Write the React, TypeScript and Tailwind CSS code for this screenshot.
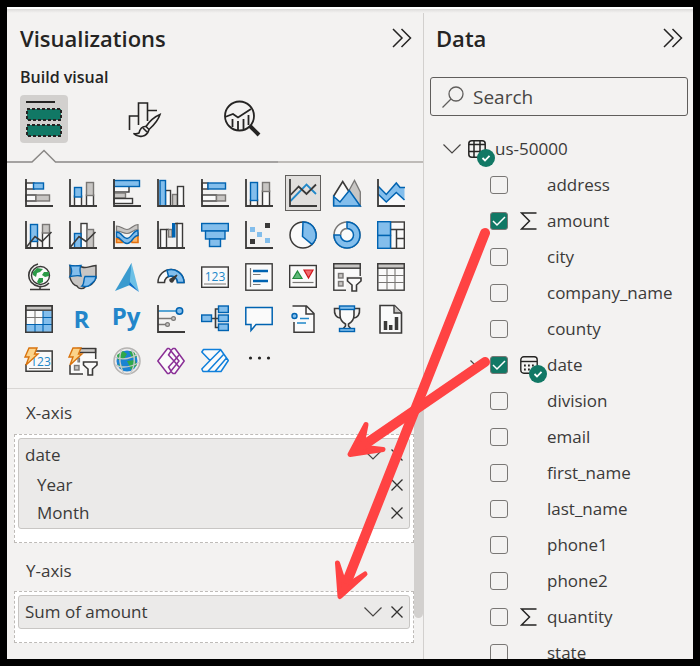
import { useState, type ReactNode } from 'react'

const INK = '#3b3a39'
const BLUE = '#0063b1'
const SKY = '#83beec'
const GRAY = '#797775'
const SILVER = '#c8c6c4'
const PAPER = '#fafafa'

type BoxTone = 'blue' | 'gray' | 'white' | 'silver'

const tones: Record<BoxTone, { fill: string; stroke: string }> = {
  blue: { fill: SKY, stroke: BLUE },
  gray: { fill: SILVER, stroke: GRAY },
  silver: { fill: SILVER, stroke: INK },
  white: { fill: PAPER, stroke: INK }
}

// Rectangle given by its two corners, in one of the shared chart tones
function Box({ p, tone }: { p: [number, number, number, number]; tone: BoxTone }) {
  const [x1, y1, x2, y2] = p
  return <rect x={x1} y={y1} width={x2 - x1} height={y2 - y1} strokeWidth={1.4} {...tones[tone]} />
}

function Axis() {
  return <path d="M1 0V27H28" fill="none" stroke={INK} strokeWidth={1.8} />
}

function Bolt() {
  return (
    <path
      d="M4 1H12L9.500 7H13L1 18L4 10H0Z"
      fill="#fbd38a"
      stroke="#d9730d"
      strokeWidth={1.4}
    />
  )
}

function Funnel() {
  return (
    <path d="M14.500 15H28V18L23.500 22V28H19V22L14.500 18Z" fill={PAPER} stroke={INK} strokeWidth={1.6} />
  )
}

const visuals: { name: string; icon: ReactNode }[] = [
  {
    name: 'Stacked bar chart',
    icon: (
      <>
        <Box p={[1, 4, 9, 10]} tone="white" />
        <Box p={[8.5, 4, 18.5, 10]} tone="blue" />
        <Box p={[1, 16, 11, 22]} tone="white" />
        <Box p={[11, 16, 24.5, 22]} tone="gray" />
        <Axis />
      </>
    )
  },
  {
    name: 'Stacked column chart',
    icon: (
      <>
        <Box p={[5.5, 17, 12.5, 27]} tone="white" />
        <Box p={[5.5, 8.5, 12.5, 18]} tone="blue" />
        <Box p={[17.5, 16, 24.5, 27]} tone="white" />
        <Box p={[17.5, 3.5, 24.5, 16.5]} tone="gray" />
        <Axis />
      </>
    )
  },
  {
    name: 'Clustered bar chart',
    icon: (
      <>
        <Box p={[1, 7, 16, 13]} tone="white" />
        <Box p={[1, 14, 12.5, 19]} tone="gray" />
        <Box p={[1, 19.5, 19.5, 24.5]} tone="white" />
        <Box p={[1, 1.5, 26.5, 7.5]} tone="blue" />
        <Axis />
      </>
    )
  },
  {
    name: 'Clustered column chart',
    icon: (
      <>
        <Box p={[8.5, 11.5, 13.5, 27]} tone="white" />
        <Box p={[3, 1.5, 8.5, 27]} tone="blue" />
        <Box p={[15.5, 15.5, 20.5, 27]} tone="gray" />
        <Box p={[20.5, 7.5, 26.5, 27]} tone="white" />
        <Axis />
      </>
    )
  },
  {
    name: '100% stacked bar chart',
    icon: (
      <>
        <Box p={[1, 4, 7, 10]} tone="white" />
        <Box p={[7, 4, 24.5, 10]} tone="blue" />
        <Box p={[1, 16, 15.5, 22]} tone="white" />
        <Box p={[15.5, 16, 24.5, 22]} tone="gray" />
        <Axis />
      </>
    )
  },
  {
    name: '100% stacked column chart',
    icon: (
      <>
        <Box p={[5.5, 21, 12.5, 27]} tone="white" />
        <Box p={[5.5, 3.5, 12.5, 21.5]} tone="blue" />
        <Box p={[17.5, 12, 24.5, 27]} tone="white" />
        <Box p={[17.5, 3.5, 24.5, 12.5]} tone="gray" />
        <Axis />
      </>
    )
  },
  {
    name: 'Line chart',
    icon: (
      <>
        <path d="M1.500 22L17.500 5.500L27 15" fill="none" stroke="#2188c9" strokeWidth={1.8} />
        <path d="M1.500 16L9.700 7.500L17.500 15L27 5.500" fill="none" stroke={INK} strokeWidth={1.8} />
        <Axis />
      </>
    )
  },
  {
    name: 'Area chart',
    icon: (
      <>
        <path d="M13 17L21.500 1.500L27.300 13V27Z" fill={SILVER} stroke={GRAY} strokeWidth={1.3} />
        <path d="M.700 17L9.700 2.500L20 19L14 26H.700Z" fill={PAPER} stroke={INK} strokeWidth={1.6} />
        <path d="M.700 17.500L7 23L16.300 11.500L27.300 27H.700Z" fill={SKY} stroke={BLUE} strokeWidth={1.5} />
      </>
    )
  },
  {
    name: 'Stacked area chart',
    icon: (
      <>
        <path d="M1 15L9.300 23L19.300 13.500L27.500 21V27H1Z" fill={PAPER} />
        <path d="M1 7L9.300 15.500L19.300 4L23 8.500H27.500V21L19.300 13.500L9.300 23L1 15Z" fill={SKY} />
        <path
          d="M1 7L9.300 15.500L19.300 4L23 8.500H28M1 15L9.300 23L19.300 13.500L27.500 21"
          fill="none"
          stroke={BLUE}
          strokeWidth={1.5}
        />
        <Axis />
      </>
    )
  },
  {
    name: 'Line and stacked column chart',
    icon: (
      <>
        <Box p={[5.5, 20, 12.5, 27]} tone="white" />
        <Box p={[5.5, 3.5, 12.5, 20.5]} tone="blue" />
        <Box p={[17.5, 11.5, 24.5, 27]} tone="white" />
        <Box p={[17.5, 3.5, 24.5, 12]} tone="gray" />
        <path d="M1.500 26L10 15.500L17 20.500L26.500 11" fill="none" stroke={INK} strokeWidth={1.6} />
        <Axis />
      </>
    )
  },
  {
    name: 'Line and clustered column chart',
    icon: (
      <>
        <Box p={[12, 2.5, 18, 27]} tone="white" />
        <Box p={[5.5, 12.5, 12, 27]} tone="blue" />
        <Box p={[18, 8.5, 24.5, 27]} tone="gray" />
        <path d="M1.500 26L10 15.500L17 20.500L26.500 11" fill="none" stroke={INK} strokeWidth={1.6} />
        <Axis />
      </>
    )
  },
  {
    name: 'Ribbon chart',
    icon: (
      <>
        <path d="M3.500 17.500C7 17.500 8 19 9.500 21.500H3.500ZM25 12C21 12 20 15 18 18L19 21.500H25Z" fill="#f9b56b" stroke="#e3700d" strokeWidth={1.6} />
        <path d="M3.500 5C8 5 10 8.500 14 8.500S20 3.500 25 3.500V8.500C20 8.500 18 12.500 14 12.500S8 10 3.500 10Z" fill={SILVER} stroke={GRAY} strokeWidth={1.2} />
        <path d="M3.500 11C9 11 9.500 17.500 14 17.500S20 9.500 25 9.500V14.500C20 14.500 19 22.500 14 22.500S8 16 3.500 16Z" fill={SKY} stroke={BLUE} strokeWidth={1.4} />
        <Axis />
      </>
    )
  },
  {
    name: 'Waterfall chart',
    icon: (
      <>
        <Box p={[3.5, 8.5, 9.5, 27]} tone="white" />
        <path d="M9.500 8.500H12" stroke={INK} strokeWidth={1.5} />
        <Box p={[11.5, 8.5, 15, 16]} tone="gray" />
        <rect x={15} y={2} width={3.500} height={14.500} fill={BLUE} />
        <path d="M18 2.500H21" stroke={INK} strokeWidth={1.5} />
        <Box p={[20, 2.5, 25.5, 27]} tone="white" />
        <Axis />
      </>
    )
  },
  {
    name: 'Funnel',
    icon: (
      <>
        <Box p={[0.7, 2.5, 27.3, 10]} tone="blue" />
        <Box p={[4.5, 10, 24, 18]} tone="blue" />
        <Box p={[8.5, 18, 19.5, 25.5]} tone="blue" />
      </>
    )
  },
  {
    name: 'Scatter chart',
    icon: (
      <>
        <path d="M5 6h5v5h-5zM12 11h5v5h-5zM20 17h5v5h-5z" fill={SKY} />
        <path d="M20 2h5v5h-5zM5 18h5v5h-5z" fill={INK} />
        <Axis />
      </>
    )
  },
  {
    name: 'Pie chart',
    icon: (
      <>
        <circle cx={14} cy={14} r={13} fill={PAPER} stroke={INK} strokeWidth={1.5} />
        <path d="M14 1A13 13 0 0 1 23 23.400L13.500 15.500Z" fill={SKY} stroke={BLUE} strokeWidth={1.5} />
      </>
    )
  },
  {
    name: 'Donut chart',
    icon: (
      <>
        <circle cx={14} cy={14} r={13} fill={PAPER} stroke={GRAY} strokeWidth={1.5} />
        <path d="M14 1A13 13 0 1 1 1 14H7.500A6.500 6.500 0 1 0 14 7.500Z" fill={SKY} stroke={BLUE} strokeWidth={1.5} />
        <path d="M7.500 14A6.500 6.500 0 0 1 14 7.500" fill="none" stroke={GRAY} strokeWidth={1.5} />
      </>
    )
  },
  {
    name: 'Treemap',
    icon: (
      <>
        <Box p={[13.5, 1, 27.3, 27.3]} tone="white" />
        <path d="M13 8.500H27M19.500 8.500V27M19.500 17.500H27" stroke={INK} strokeWidth={1.5} />
        <Box p={[0.7, 0.7, 13.5, 14.5]} tone="blue" />
        <Box p={[0.7, 14.5, 13.5, 27.3]} tone="blue" />
      </>
    )
  },
  {
    name: 'Map',
    icon: (
      <>
        <circle cx={15.500} cy={12.500} r={9} fill={PAPER} stroke={INK} strokeWidth={1.4} />
        <path d="M8 9L12 5L18 6L15 9L12 10L11 14L8 12ZM19 9L24 9V13L20 14L17 12ZM14 15L18 15L18 19L14 21L12 19Z" fill="#2c9a48" />
        <path d="M13 1C1 4 0 21 14 23.500C18 24 22 22 24 20M15 23.500V26M5 26.500H25" fill="none" stroke={INK} strokeWidth={1.6} />
      </>
    )
  },
  {
    name: 'Filled map',
    icon: (
      <>
        <path d="M1 2.500C5 4 9 2 13 4C17 6 20 3 27 2.500V15C25 20 21 23 17 23C15 26 10 27 8 23C4 22 2 18 1 15Z" fill={SILVER} stroke={INK} strokeWidth={1.4} />
        <path d="M1 2.500C5 3 8 3 12 2.500C10 6 11 8 12 13C8 12 5 13 1 13.500C4 9 3 6 1 2.500ZM16 13.500H27C27 18 24 19 21 22C18 25 16 23 13 23C16 20 14 17 16 13.500Z" fill={SKY} stroke={BLUE} strokeWidth={1.4} />
      </>
    )
  },
  {
    name: 'Azure map',
    icon: (
      <>
        <path d="M18.500 0L2 28L17 22Z" fill="#3a9bcf" />
        <path d="M18.500 0L17 22L11 18Z" fill="#3a9bcf" />
        <path d="M18.500 0L26 29L17 19Z" fill="#6cc0e6" />
        <path d="M17 19L26 29L16 22Z" fill="#0b6fcb" />
      </>
    )
  },
  {
    name: 'Gauge',
    icon: (
      <>
        <path d="M1 19.500A13 13 0 0 1 27 19.500H20.500A6.500 6.500 0 0 0 7.500 19.500Z" fill={PAPER} stroke={INK} strokeWidth={1.5} />
        <path d="M10 7.200A13 13 0 0 1 27 19.500H20.500A6.500 6.500 0 0 0 11.500 13.500Z" fill={SKY} stroke={BLUE} strokeWidth={1.5} />
        <path d="M20 12L15.500 19A2 2 0 0 1 13 16.500Z" fill={INK} stroke={INK} strokeWidth={1.3} />
      </>
    )
  },
  {
    name: 'Card',
    icon: (
      <>
        <Box p={[0.7, 4, 27.3, 24.3]} tone="white" />
        <text x={14} y={18} textAnchor="middle" fontSize={12} fill="#2188c9">123</text>
        <path d="M3 21H25" stroke={GRAY} strokeWidth={1} />
      </>
    )
  },
  {
    name: 'Multi-row card',
    icon: (
      <>
        <Box p={[0.8, 0.8, 27.2, 27.2]} tone="white" />
        <path d="M5.500 5V24M8 11.500H15.500M8 21.500H15.500" stroke={GRAY} strokeWidth={1.2} />
        <path d="M8 8H23M8 18H23" stroke={BLUE} strokeWidth={2.600} />
      </>
    )
  },
  {
    name: 'KPI',
    icon: (
      <>
        <Box p={[0.7, 2.5, 27.3, 24.3]} tone="white" />
        <path d="M8.500 8L13 15.500H4Z" fill="#5fb878" stroke="#208a3c" strokeWidth={1.2} />
        <path d="M15 7H24L19.500 15Z" fill="#f0696d" stroke="#d0161c" strokeWidth={1.2} />
        <path d="M3.500 19.500H24.500" stroke={GRAY} strokeWidth={1.2} />
      </>
    )
  },
  {
    name: 'Slicer',
    icon: (
      <>
        <Box p={[0.8, 0.8, 27.2, 27.2]} tone="white" />
        <Box p={[0.8, 0.8, 27.2, 5.2]} tone="silver" />
        <Box p={[5.5, 10.5, 10, 15]} tone="gray" />
        <Box p={[5.5, 18.5, 10, 23]} tone="gray" />
        <path d="M13 13H30V30H13Z" fill="#f3f2f1" />
        <Funnel />
      </>
    )
  },
  {
    name: 'Table',
    icon: (
      <>
        <Box p={[0.8, 0.8, 27.2, 27.2]} tone="white" />
        <Box p={[0.8, 0.8, 27.2, 5.2]} tone="silver" />
        <path d="M10 6V27M18 6V27M1 12.500H27M1 19.500H27" stroke={GRAY} strokeWidth={1.1} />
      </>
    )
  },
  {
    name: 'Matrix',
    icon: (
      <>
        <Box p={[0.8, 0.8, 27.2, 27.2]} tone="white" />
        <path d="M18 6H27V27H1V19.500H18Z" fill={SKY} />
        <path d="M10 6V19M1 12.500H18" stroke={GRAY} strokeWidth={1.1} />
        <path d="M18 6V27M10 19V27M18 12.500H27M1 19.500H27" stroke={BLUE} strokeWidth={1.1} />
        <Box p={[0.8, 0.8, 27.2, 5.2]} tone="silver" />
        <path d="M.800 .800H27.200V27.200H.800Z" fill="none" stroke={INK} strokeWidth={1.5} />
      </>
    )
  },
  {
    name: 'R script visual',
    icon: <text x={12.500} y={23} textAnchor="middle" fontSize={24} fontWeight={700} fontFamily="Open Sans" fill="#2386ca">R</text>
  },
  {
    name: 'Python visual',
    icon: <text x={13} y={20} textAnchor="middle" fontSize={24} fontWeight={700} fontFamily="Open Sans" fill="#2386ca">Py</text>
  },
  {
    name: 'Key influencers',
    icon: (
      <>
        <path d="M1 6H20" stroke="#2188c9" strokeWidth={1.5} />
        <circle cx={22.500} cy={6} r={3.200} {...tones.blue} strokeWidth={1.5} />
        <path d="M1 13.500H14M1 19.500H9" stroke={GRAY} strokeWidth={1.4} />
        <circle cx={16.500} cy={13.500} r={1.900} {...tones.gray} strokeWidth={1.2} />
        <circle cx={10.500} cy={19.500} r={1.900} {...tones.gray} strokeWidth={1.2} />
        <Axis />
      </>
    )
  },
  {
    name: 'Decomposition tree',
    icon: (
      <>
        <path d="M11 13.500H18M18 4H14.500V22.500H18" fill="none" stroke={INK} strokeWidth={1.6} />
        <Box p={[0.7, 10, 10.5, 16.5]} tone="blue" />
        <Box p={[17.5, 1, 27.3, 7.500]} tone="blue" />
        <Box p={[17.5, 10, 27.3, 16.5]} tone="blue" />
        <Box p={[17.5, 19, 27.3, 25.5]} tone="blue" />
      </>
    )
  },
  {
    name: 'Q&A',
    icon: <path d="M.800 2.500H27.200V19.500H11L6 25.500V19.500H.800Z" fill={PAPER} stroke={BLUE} strokeWidth={1.5} />
  },
  {
    name: 'Smart narrative',
    icon: (
      <>
        <path d="M3.500 1H18L25 8V27.200H5V4" fill={PAPER} />
        <path d="M3.500 1H17.500L25 8.500V27.200H5V17M17 1V9H25" fill="none" stroke={INK} strokeWidth={1.5} />
        <circle cx={5.500} cy={11} r={2.500} {...tones.blue} strokeWidth={1.4} />
        <path d="M11 13.500H20M8 18H17" stroke="#2188c9" strokeWidth={1.3} />
      </>
    )
  },
  {
    name: 'Goals',
    icon: (
      <>
        <path d="M7 3.500H1.500C1 9 3 13 8 13M21 3.500H26.500C27 9 25 13 20 13" fill="none" stroke={INK} strokeWidth={1.6} />
        <path d="M7 4V10C7 14 9 17 12.500 19V21L10 24H18L15.500 21V19C19 17 21 14 21 10V4Z" fill={PAPER} stroke={INK} strokeWidth={1.6} />
        <Box p={[6.5, 1, 21.5, 4.500]} tone="blue" />
        <Box p={[6.5, 23.5, 21.5, 26.5]} tone="blue" />
      </>
    )
  },
  {
    name: 'Paginated report',
    icon: (
      <>
        <path d="M3 .500H17.500L24.500 7.500V28H3Z" fill={PAPER} stroke={INK} strokeWidth={1.6} />
        <path d="M17 .500V8H24.500" fill={SILVER} stroke={INK} strokeWidth={1.4} />
        <path d="M8.500 25V16M13.700 25V20M19.500 25V12" stroke={INK} strokeWidth={3.500} />
      </>
    )
  },
  {
    name: 'Card (new)',
    icon: (
      <>
        <path d="M10 4H27.200V24.200H1V17" fill={PAPER} stroke={INK} strokeWidth={1.5} />
        <text x={15.500} y={18.500} textAnchor="middle" fontSize={12} fill="#2188c9">123</text>
        <path d="M4 21.500H25" stroke={GRAY} strokeWidth={1} />
        <Bolt />
      </>
    )
  },
  {
    name: 'Slicer (new)',
    icon: (
      <>
        <path d="M9 1H27V14H15V27H1V19Z" fill={PAPER} />
        <Box p={[9, 1.5, 26.5, 5.5]} tone="silver" />
        <path d="M26.700 1V12M1 18V27H14" fill="none" stroke={INK} strokeWidth={1.5} />
        <Box p={[5.5, 18.5, 10, 23]} tone="gray" />
        <path d="M9 15V11H10.500V15Z" {...tones.gray} strokeWidth={1.2} />
        <Funnel />
        <Bolt />
      </>
    )
  },
  {
    name: 'ArcGIS Maps',
    icon: (
      <>
        <circle cx={14} cy={14} r={13} fill="#eceae9" stroke="#b5b3b1" strokeWidth={1.5} />
        <circle cx={14} cy={14} r={10.500} fill="#1a83d3" />
        <path d="M4 8L10 4L14 7L11 12L5 13ZM16 4L21 5L24 10L19 11ZM14 14L22 13L24 18L18 23L16 18ZM5 17L10 19L9 23Z" fill="#2fa84a" />
        <path d="M2 10C9 14 20 11 25 7M2 18C10 22 20 19 27 15M9 2C5 10 7 20 11 27M18 2C23 9 22 20 17 27" fill="none" stroke="#c4c8ca" strokeWidth={1.4} />
      </>
    )
  },
  {
    name: 'Power Apps',
    icon: (
      <>
        <path
          d="M.800 14L10.500 1.500H12L14 3.500L16 1.500H18L27.200 14L18 26.500H16L14 24.500L12 26.500H10.500Z"
          fill={PAPER}
          stroke="#8a2f96"
          strokeWidth={1.5}
          strokeLinejoin="round"
        />
        <path d="M14 4L22 14L14 24M17 14L11.500 8L14 4M17 14L11.500 20L14 24M17 14L22 8M17 14L22 20" fill="none" stroke="#8a2f96" strokeWidth={1.5} />
      </>
    )
  },
  {
    name: 'Power Automate',
    icon: (
      <path
        d="M2.500 2.500H19.500L27.300 13.500L20 24.500H2L.800 22L9 13.500L.800 5ZM9 13.500L19.500 3M6.700 24.500L22.500 7.500M14 24.500L25.500 11"
        fill={PAPER}
        stroke="#0f7fdb"
        strokeWidth={1.500}
        strokeLinejoin="round"
      />
    )
  },
  {
    name: 'Get more visuals',
    icon: (
      <g fill="#252423">
        <circle cx={5.500} cy={11} r={1.600} />
        <circle cx={14.500} cy={11} r={1.600} />
        <circle cx={23.500} cy={11} r={1.600} />
      </g>
    )
  }
]

type Field = { name: string; kind?: 'sum' | 'date' }

const fields: Field[] = [
  { name: 'address' },
  { name: 'amount', kind: 'sum' },
  { name: 'city' },
  { name: 'company_name' },
  { name: 'county' },
  { name: 'date', kind: 'date' },
  { name: 'division' },
  { name: 'email' },
  { name: 'first_name' },
  { name: 'last_name' },
  { name: 'phone1' },
  { name: 'phone2' },
  { name: 'quantity', kind: 'sum' },
  { name: 'state' }
]

function CollapseButton({ label }: { label: string }) {
  return (
    <button type="button" aria-label={label} className="shrink-0">
      <svg className="block size-5" viewBox="0 0 20 20" fill="none" stroke="#252423" strokeWidth={1.5}>
        <path d="M1 1L10 10L1 19M9.500 1L18.500 10L9.500 19" />
      </svg>
    </button>
  )
}

function Chevron() {
  return (
    <svg className="block h-[18px] w-[18px]" viewBox="0 0 18 18" fill="none" stroke="#484644" strokeWidth={1.2}>
      <path d="M.500 4.500L9 13L17.500 4.500" />
    </svg>
  )
}

function Cross() {
  return (
    <svg className="block h-3 w-3" viewBox="0 0 12 12" fill="none" stroke="#323130" strokeWidth={1.3}>
      <path d="M.500 .500L11.500 11.500M11.500 .500L.500 11.500" />
    </svg>
  )
}

function Badge() {
  return (
    <svg className="absolute top-[9px] left-[9px] h-[18px] w-[18px]" viewBox="0 0 18 18">
      <circle cx={9} cy={9} r={9} fill="#117865" />
      <path d="M5.500 9L8 11.500L12.500 6.800" fill="none" stroke="#fff" strokeWidth={1.8} />
    </svg>
  )
}

function FieldIcon({ kind }: { kind?: Field['kind'] }) {
  if (kind === 'sum') {
    return (
      <svg className="block h-[18px] w-[18px]" viewBox="0 0 18 18" fill="none" stroke="#252423" strokeWidth={1.5}>
        <path d="M16.500 1H1.500L9.500 9L1.500 17H16.500" />
      </svg>
    )
  }
  if (kind === 'date') {
    return (
      <span className="relative block h-[18px] w-[18px]">
        <svg className="block h-[18px] w-[18px]" viewBox="0 0 18 18" fill="none" stroke="#252423" strokeWidth={1.4}>
          <rect x={0.800} y={0.800} width={16.400} height={16.400} rx={3} />
          <path d="M1 5.500H17" />
          <path d="M4 9.500H15M4 13.500H15" strokeWidth={1.8} strokeDasharray="1.800 2.200" />
        </svg>
        <Badge />
      </span>
    )
  }
  return null
}

function WellButton({ label, children }: { label: string; children: ReactNode }) {
  return (
    <button type="button" aria-label={label} className="shrink-0">
      {children}
    </button>
  )
}

export default function App() {
  const [selected, setSelected] = useState('Line chart')
  const [checked, setChecked] = useState<string[]>(['amount', 'date'])
  const [query, setQuery] = useState('')

  const toggle = (name: string) =>
    setChecked((prev) => (prev.includes(name) ? prev.filter((n) => n !== name) : [...prev, name]))

  const visibleFields = fields.filter((f) => f.name.includes(query.toLowerCase()))

  return (
    <main className="relative flex h-screen overflow-hidden border-7 border-black bg-[#f3f2f1] font-['Open_Sans',sans-serif] text-[#3b3a39]">
      <div className="absolute inset-x-0 top-0 h-[6px] border-t-2 border-white bg-linear-to-b from-[#dddcdb] to-[#f3f2f1]" />

      {/* Visualizations pane */}
      <section className="flex min-w-0 flex-1 flex-col border-r border-[#d2d0ce]">
        <header className="flex items-center justify-between pt-[15px] pr-[11px] pl-[13px]">
          <h1 className="text-[22px] leading-8 font-semibold text-[#252423]">Visualizations</h1>
          <CollapseButton label="Collapse Visualizations pane" />
        </header>
        <h2 className="pt-[11px] pl-[13px] text-base leading-6 font-semibold text-[#252423]">Build visual</h2>

        <div className="flex gap-[50px] pt-[6px] pl-[13px]">
          <button type="button" aria-label="Build visual" className="size-12 rounded bg-[#d2d0ce]">
            <svg className="block size-12" viewBox="0 0 48 48">
              <path d="M6 7H35" stroke="#252423" strokeWidth={2} />
              <path d="M7 14H41V25H7ZM7 30H41V41H7Z" fill="#117865" stroke="#252423" strokeWidth={2} strokeDasharray="3 2" />
            </svg>
          </button>
          <button type="button" aria-label="Format visual" className="size-12">
            <svg className="block size-12" viewBox="0 0 48 48" fill="none" stroke="#252423" strokeWidth={1.600}>
              <path d="M11.500 35V21H20M20.500 30V8H29.500V26M29.500 15.500H39" />
              <path d="M42 19.500C36 22 31 27 28 31.500L31 34.500C36 30 40 26 42 19.500Z" fill="#f3f2f1" />
              <path d="M28 31.500C24 31 22 34 21 38C19 39 17 39 15.500 38.500C20 43 29 42.500 31 34.500M25 33L29 37" />
            </svg>
          </button>
          <button type="button" aria-label="Add further analyses" className="size-12">
            <svg className="block size-12" viewBox="0 0 48 48" fill="none" stroke="#252423" strokeWidth={1.800}>
              <circle cx={23.500} cy={21} r={14.500} />
              <path d="M9 22L17 19L22 22.500L35 14" />
              <path d="M16.500 24V32M22 26V35M27.500 24V34M32.500 20V30" />
              <path d="M34 31L43 40" strokeWidth={4} />
            </svg>
          </button>
        </div>

        <div className="flex items-end pt-[6px]">
          <svg className="block h-[14px] w-[271px] shrink-0" viewBox="0 0 271 14" fill="none" stroke="#8a8886" strokeWidth={1.500}>
            <path d="M0 13H25L37 1.500L48.500 13H271" />
          </svg>
          <div className="h-[2px] flex-1 bg-[#bebbb8]" />
        </div>

        <div className="grid grid-cols-[repeat(9,36px)] gap-x-2 gap-y-[6px] pt-3 pb-[9px] pl-[14px]">
          {visuals.map(({ name, icon }) => (
            <button
              key={name}
              type="button"
              aria-label={name}
              aria-pressed={selected === name}
              onClick={() => setSelected(name)}
              className={`flex size-9 items-center justify-center border ${
                selected === name ? 'border-[#605e5c] bg-[#e1dfdd]' : 'border-transparent'
              }`}
            >
              <svg className="block size-7 shrink-0 overflow-visible" viewBox="0 0 28 28">
                {icon}
              </svg>
            </button>
          ))}
        </div>

        <div className="flex min-h-0 flex-1 border-t border-[#d8d6d4]">
          <div className="min-w-0 flex-1 pl-[7px] text-[17px]">
            <h3 className="pt-3 pb-[9px] pl-3 leading-6">X-axis</h3>
            <div className="border border-dashed border-[#bebbb8] bg-white px-[3px] pt-[3px] pb-[13px]">
              <div className="rounded-[3px] border border-[#c8c6c4] bg-[#ebeae9] pr-[6px] pb-px pl-[6px]">
                <div className="flex h-8 items-center gap-[9px]">
                  <span className="flex-1">date</span>
                  <WellButton label="Field options for date"><Chevron /></WellButton>
                  <WellButton label="Remove date"><Cross /></WellButton>
                </div>
                {['Year', 'Month'].map((level) => (
                  <div key={level} className="flex h-7 items-center pl-3">
                    <span className="flex-1">{level}</span>
                    <WellButton label={`Remove ${level}`}><Cross /></WellButton>
                  </div>
                ))}
              </div>
            </div>
            <h3 className="pt-4 pb-2 pl-3 leading-6">Y-axis</h3>
            <div className="border border-dashed border-[#bebbb8] bg-white px-[3px] pt-[3px] pb-[13px]">
              <div className="flex h-[34px] items-center gap-[9px] rounded-[3px] border border-[#c8c6c4] bg-[#ebeae9] px-[6px]">
                <span className="flex-1">Sum of amount</span>
                <WellButton label="Field options for Sum of amount"><Chevron /></WellButton>
                <WellButton label="Remove Sum of amount"><Cross /></WellButton>
              </div>
            </div>
          </div>
          <div className="w-[9px] shrink-0 pt-4 pb-[41px]">
            <div className="h-full rounded-full bg-[#d2d0ce]" />
          </div>
        </div>
      </section>

      {/* Data pane */}
      <section className="w-[269px] shrink-0">
        <header className="flex items-center justify-between pt-[15px] pr-[10px] pl-3">
          <h1 className="text-[22px] leading-8 font-semibold text-[#252423]">Data</h1>
          <CollapseButton label="Collapse Data pane" />
        </header>

        <div className="pt-[23px] pr-[5px] pb-[15px] pl-[6px]">
          <label className="flex h-[39px] items-center gap-[9px] rounded-[3px] border border-[#605e5c] pr-2 pl-[11px]">
            <svg className="block h-[22px] w-[22px] shrink-0" viewBox="0 0 22 22" fill="none" stroke="#605e5c" strokeWidth={1.300}>
              <circle cx={14} cy={8} r={7} />
              <path d="M9 13L.500 21.500" />
            </svg>
            <input
              type="text"
              aria-label="Search"
              placeholder="Search"
              value={query}
              onChange={(e) => setQuery(e.target.value)}
              className="w-full min-w-0 bg-transparent pt-px text-[19px] outline-none placeholder:text-[#484644]"
            />
          </label>
        </div>

        <div className="flex h-9 items-center pl-[19px] text-[17px]">
          <button type="button" aria-label="Collapse us-50000"><Chevron /></button>
          <span className="relative mr-[9px] ml-[7px] block h-[18px] w-[18px]">
            <svg className="block h-[18px] w-[18px]" viewBox="0 0 18 18" fill="none" stroke="#252423" strokeWidth={1.500}>
              <rect x={0.800} y={0.800} width={16.400} height={16.400} rx={3} />
              <path d="M6 1V17M12 1V17M1 4.500H17M1 11.500H17" />
            </svg>
            <Badge />
          </span>
          <span>us-50000</span>
        </div>

        <ul className="text-[17px]">
          {visibleFields.map(({ name, kind }) => (
            <li key={name} className="flex h-9 items-center pl-[46px]">
              <span className="mr-[2px] w-[18px]">{kind === 'date' && <Chevron />}</span>
              <label className="flex items-center">
                <span className="relative block h-[18px] w-[18px]">
                  <input
                    type="checkbox"
                    checked={checked.includes(name)}
                    onChange={() => toggle(name)}
                    className="peer block h-[18px] w-[18px] appearance-none rounded-[3px] border border-[#797775] checked:bg-[#117865]"
                  />
                  <svg
                    className="pointer-events-none absolute inset-0 hidden h-[18px] w-[18px] peer-checked:block"
                    viewBox="0 0 18 18"
                    fill="none"
                    stroke="#fff"
                    strokeWidth={1.500}
                  >
                    <path d="M3 9L7 13L15 5" />
                  </svg>
                </span>
                <span className="mr-[9px] ml-3 block w-[18px]"><FieldIcon kind={kind} /></span>
                <span>{name}</span>
              </label>
            </li>
          ))}
        </ul>
      </section>

      {/* Annotation arrows from the ticked fields to their wells */}
      <svg
        className="pointer-events-none absolute -top-[7px] -left-[7px] h-[666px] w-[700px]"
        viewBox="0 0 700 666"
        fill="#ff4343"
        stroke="#ff4343"
        strokeLinecap="round"
        strokeLinejoin="round"
      >
        <path d="M485 233L346 584" strokeWidth={10} />
        <path d="M337.500 563L343 580L351 583L365 574L340 596.500Z" strokeWidth={5} />
        <path d="M485 362L361 447" strokeWidth={10} />
        <path d="M366 424.500L363 440L370 448L383 449.500L350 454.500Z" strokeWidth={5} />
      </svg>
    </main>
  )
}
